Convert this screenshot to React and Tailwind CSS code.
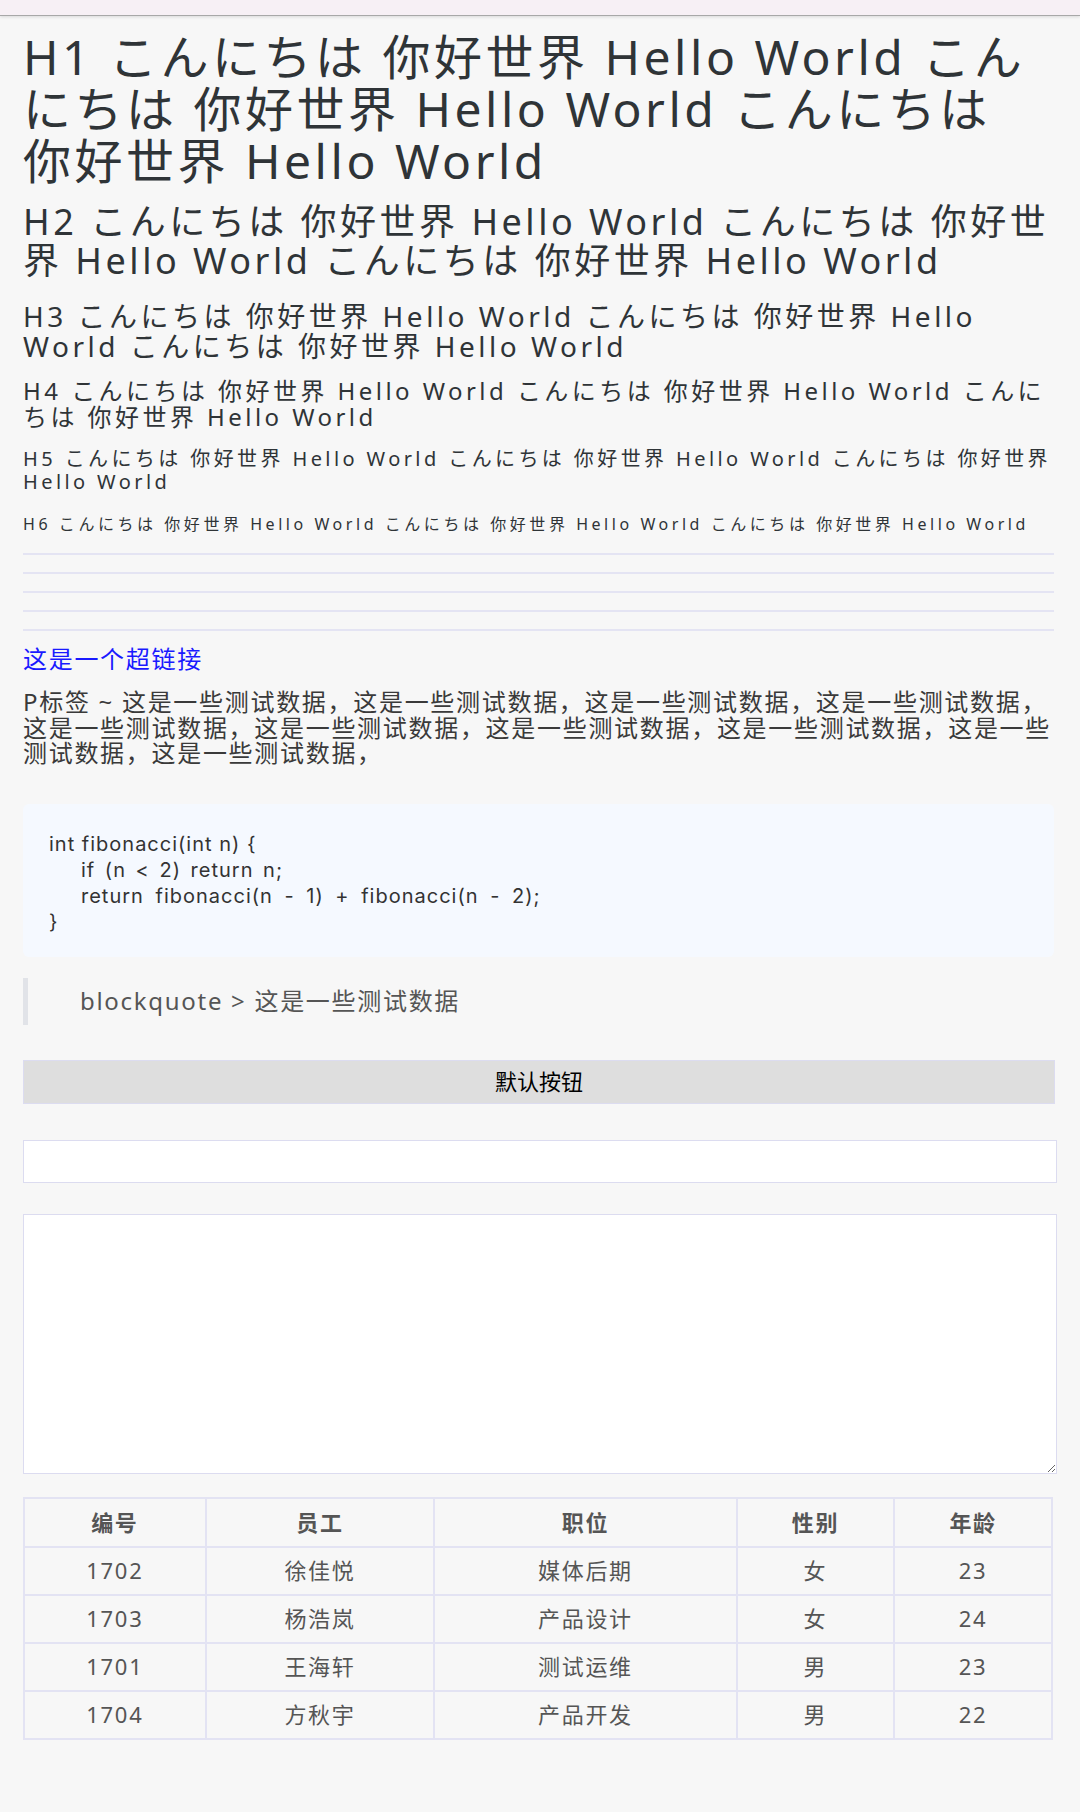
import React from 'react'

const HELLO = 'こんにちは 你好世界 Hello World'

const headings = [
  { tag: 'h1', label: 'H1', cls: 'mt-[15px] text-[48px] leading-[52px] tracking-[3.5px]' },
  { tag: 'h2', label: 'H2', cls: 'mt-[15px] text-[36px] leading-[39px] tracking-[3.5px]' },
  { tag: 'h3', label: 'H3', cls: 'mt-[21px] text-[28px] leading-[30px] tracking-[3.5px]' },
  { tag: 'h4', label: 'H4', cls: 'mt-[17px] text-[24px] leading-[26px] tracking-[3.45px]' },
  { tag: 'h5', label: 'H5', cls: 'mt-[17px] text-[20px] leading-[23px] tracking-[3.4px]' },
  { tag: 'h6', label: 'H6', cls: 'mt-[22px] text-[16px] leading-[18px] tracking-[3.55px]' },
]

const staff = [
  ['1702', '徐佳悦', '媒体后期', '女', '23'],
  ['1703', '杨浩岚', '产品设计', '女', '24'],
  ['1701', '王海轩', '测试运维', '男', '23'],
  ['1704', '方秋宇', '产品开发', '男', '22'],
]

const cols = [
  ['编号', 'w-[182px]'],
  ['员工', 'w-[229px]'],
  ['职位', 'w-[303px]'],
  ['性别', 'w-[158px]'],
  ['年龄', 'w-[158px]'],
]

const sentence = '这是一些测试数据，'

export default function App() {
  return (
    <div className="min-h-screen bg-[#f7f7f7] font-[family-name:'Noto_Sans','Noto_Sans_CJK_SC',sans-serif] text-[#2f3437]">
      <div className="h-[16px] bg-[#f7f0f5] border-b border-[#a8a8a8] shadow-[0_1px_3px_rgba(0,0,0,0.12)]" />

      <div className="pl-[23px] pr-[23px] pb-10">
        {headings.map(({ tag: Tag, label, cls }) => (
          <Tag key={label} className={'font-normal ' + cls}>
            {label} {HELLO} {HELLO} {HELLO}
          </Tag>
        ))}

        <div className="mt-[20px] flex flex-col gap-[17px]">
          {[0, 1, 2, 3, 4].map((i) => (
            <div key={i} className="h-[2px] w-[1031px] bg-[#e4e4f3]" />
          ))}
        </div>

        <a href="#" className="mt-[15px] block text-[24px] leading-[26px] tracking-[1.7px] text-[#1a1aff]">
          这是一个超链接
        </a>

        <p className="mt-[17px] text-[24px] leading-[25.5px] tracking-[1.7px] text-[#3a3a3a]">
          P标签 ~ {sentence.repeat(10)}
        </p>

        <div className="mt-[38px] w-[1031px] rounded-md bg-[#f5f9ff] px-[26px] pt-[27px] pb-[22px] font-[family-name:Inter,sans-serif] text-[20px] leading-[26px] tracking-[1px] text-[#333] whitespace-pre">
          <div>{'int fibonacci(int n) {'}</div>
          <div className="pl-[32px] [word-spacing:3px]">{'if (n < 2) return n;'}</div>
          <div className="pl-[32px] [word-spacing:5px]">{'return fibonacci(n - 1) + fibonacci(n - 2);'}</div>
          <div>{'}'}</div>
        </div>

        <blockquote className="mt-[21px] flex h-[47px] items-center border-l-[5px] border-[#e1e3e8] pl-[52px] text-[24px] tracking-[1.7px] text-[#555]">
          blockquote &gt; 这是一些测试数据
        </blockquote>

        <button className="mt-[35px] block h-[44px] w-[1032px] border border-[#dcdcf0] bg-[#dedede] text-[22px] text-black">
          默认按钮
        </button>

        <input className="mt-[36px] block h-[43px] w-[1034px] border border-[#dcdcf0] bg-white px-2 text-[20px] outline-none" />

        <textarea className="mt-[31px] block h-[260px] w-[1034px] border border-[#dcdcf0] bg-white px-2 text-[20px] outline-none" />

        <table className="mt-[23px] w-[1030px] border-collapse text-center text-[22px] tracking-[1.7px] text-[#555]">
          <thead>
            <tr className="h-[49px]">
              {cols.map(([name, w]) => (
                <th key={name} className={w + ' border-2 border-[#e3e3f3] font-bold'}>
                  {name}
                </th>
              ))}
            </tr>
          </thead>
          <tbody>
            {staff.map((row) => (
              <tr key={row[0]} className="h-[48px]">
                {row.map((cell, i) => (
                  <td key={i} className="border-2 border-[#e3e3f3]">
                    {cell}
                  </td>
                ))}
              </tr>
            ))}
          </tbody>
        </table>
      </div>
    </div>
  )
}
